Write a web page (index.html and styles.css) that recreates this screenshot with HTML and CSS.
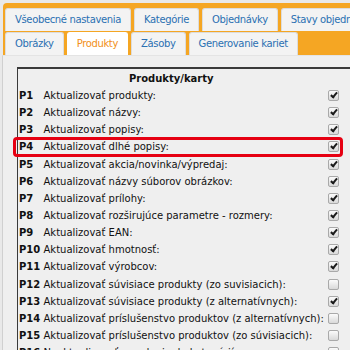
FILE: index.html
```html
<!DOCTYPE html>
<html lang="sk">
<head>
    <meta charset="UTF-8">
    <title>Nastavenia - Produkty</title>
    <link rel="stylesheet" href="styles.css">
</head>
<body>

    <div class="tabs">
        <div class="tab-row">
            <a class="tab">Všeobecné nastavenia</a>
            <a class="tab">Kategórie</a>
            <a class="tab">Objednávky</a>
            <a class="tab">Stavy objednávok</a>
        </div>
        <div class="tab-row">
            <a class="tab">Obrázky</a>
            <a class="tab active">Produkty</a>
            <a class="tab">Zásoby</a>
            <a class="tab">Generovanie kariet</a>
        </div>
    </div>

    <div class="panel">
        <table class="grid">
            <colgroup>
                <col class="col-code">
                <col class="col-text">
                <col class="col-check">
            </colgroup>
            <tr>
                <th colspan="2">Produkty/karty</th>
                <th></th>
            </tr>
            <tr><td class="code">P1</td><td>Aktualizovať produkty:</td><td class="check"><span class="box on"></span></td></tr>
            <tr><td class="code">P2</td><td>Aktualizovať názvy:</td><td class="check"><span class="box on"></span></td></tr>
            <tr><td class="code">P3</td><td>Aktualizovať popisy:</td><td class="check"><span class="box on"></span></td></tr>
            <tr class="marked"><td class="code">P4</td><td>Aktualizovať dlhé popisy:</td><td class="check"><span class="box on"></span></td></tr>
            <tr><td class="code">P5</td><td>Aktualizovať akcia/novinka/výpredaj:</td><td class="check"><span class="box on"></span></td></tr>
            <tr><td class="code">P6</td><td>Aktualizovať názvy súborov obrázkov:</td><td class="check"><span class="box on"></span></td></tr>
            <tr><td class="code">P7</td><td>Aktualizovať prílohy:</td><td class="check"><span class="box on"></span></td></tr>
            <tr><td class="code">P8</td><td>Aktualizovať rozširujúce parametre - rozmery:</td><td class="check"><span class="box on"></span></td></tr>
            <tr><td class="code">P9</td><td>Aktualizovať EAN:</td><td class="check"><span class="box on"></span></td></tr>
            <tr><td class="code">P10</td><td>Aktualizovať hmotnosť:</td><td class="check"><span class="box on"></span></td></tr>
            <tr><td class="code">P11</td><td>Aktualizovať výrobcov:</td><td class="check"><span class="box on"></span></td></tr>
            <tr><td class="code">P12</td><td>Aktualizovať súvisiace produkty (zo suvisiacich):</td><td class="check"><span class="box"></span></td></tr>
            <tr><td class="code">P13</td><td>Aktualizovať súvisiace produkty (z alternatívnych):</td><td class="check"><span class="box on"></span></td></tr>
            <tr><td class="code">P14</td><td>Aktualizovať príslušenstvo produktov (z alternatívnych):</td><td class="check"><span class="box"></span></td></tr>
            <tr><td class="code">P15</td><td>Aktualizovať príslušenstvo produktov (zo súvisiacich):</td><td class="check"><span class="box"></span></td></tr>
            <tr><td class="code">P16</td><td>Neaktualizovať zaradenie do kategórií:</td><td class="check"><span class="box"></span></td></tr>
        </table>
    </div>

</body>
</html>
```

FILE: styles.css
```css
html, body {
    margin: 0;
    overflow: hidden;
    height: 100%;
}

body {
    background-color: #e9e9e9;
    font-family: "DejaVu Sans", Verdana, sans-serif;
    font-size: 10px;
    color: #111;
}

.tabs {
    margin: 3px 0 0 3px;
    padding: 5px 0 0 2px;
    background-color: #f5a623;
    border-radius: 4px 0 0 0;
    overflow: hidden;
}

.tab-row {
    display: flex;
    gap: 3px;
    align-items: flex-end;
}

.tab-row + .tab-row {
    margin-top: 1px;
}

.tab {
    flex-shrink: 0;
    height: 22px;
    line-height: 22px;
    padding: 0 9px;
    white-space: nowrap;
    letter-spacing: -0.35px;
    color: #2a70b2;
    background-color: #f3f3f3;
    border: 1px solid #dcdcdc;
    border-bottom: none;
    border-radius: 3px 3px 0 0;
}

.tab.active {
    background-color: #fff;
    color: #f29018;
    border-color: #fff;
}

.panel {
    height: 100%;
    margin-left: 2px;
    padding: 11px 0 0 14px;
    background-color: #efefef;
    border-left: 1px solid #d0d0d0;
    border-top: 1px solid #e4e4e4;
}

.grid {
    width: 350px;
    table-layout: fixed;
    border-collapse: collapse;
    border-top: 2px solid #3a3a3a;
    border-left: 1px solid #3a3a3a;
}

.col-code { width: 26px; }
.col-text { width: 281px; }

.grid th {
    height: 18px;
    padding: 0;
    font-weight: bold;
    text-align: center;
}

.grid td {
    height: 17.15px;
    padding: 0;
    white-space: nowrap;
}

.grid td.code {
    padding-left: 1px;
    font-weight: bold;
}

.grid td.check {
    padding-left: 3px;
}

.marked td.code {
    position: relative;
}

/* red highlight round the P4 row */
.marked td.code::after {
    content: "";
    position: absolute;
    left: -5px;
    top: -1px;
    width: 324px;
    height: 14px;
    border: 3px solid #e60012;
    border-radius: 4px;
}

.box {
    display: block;
    width: 9px;
    height: 9px;
    border: 1px solid #a9a9a9;
    border-radius: 2px;
    background: linear-gradient(#fbfbfb, #d9d9d9);
    position: relative;
}

.box.on::after {
    content: "";
    position: absolute;
    left: 3px;
    top: 0px;
    width: 2px;
    height: 5px;
    border: solid #1a1a1a;
    border-width: 0 2px 2px 0;
    transform: rotate(40deg);
}
```
